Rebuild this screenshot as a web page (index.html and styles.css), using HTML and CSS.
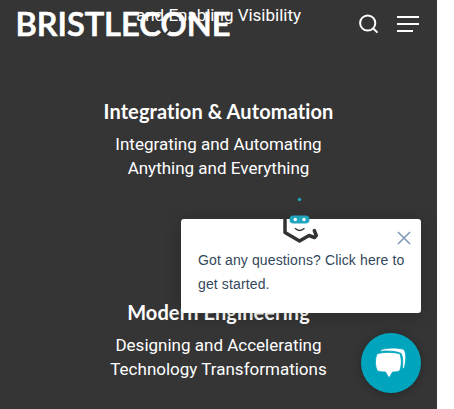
FILE: index.html
```html
<!DOCTYPE html>
<html lang="en">
<head>
<meta charset="utf-8">
<title>Bristlecone</title>
<link rel="stylesheet" href="styles.css">
</head>
<body>
<div class="page">
  <main class="services">
    <section class="service">
      <p>and Enabling Visibility</p>
    </section>
    <section class="service">
      <h2>Integration &amp; Automation</h2>
      <p>Integrating and Automating<br>Anything and Everything</p>
    </section>
    <section class="service">
      <h2>Modern Engineering</h2>
      <p>Designing and Accelerating<br>Technology Transformations</p>
    </section>
  </main>
  <header class="topbar">
    <svg class="logo" width="214" height="30" viewBox="0 0 214 30" role="img" aria-label="Bristlecone">
      <text x="-2.500" y="26.500" textLength="215" lengthAdjust="spacingAndGlyphs">BRISTLECONE</text>
      <path class="cut" d="M146 27l6-7"/>
    </svg>
    <svg class="search" width="20" height="20" viewBox="0 0 20 20"><circle cx="8.7" cy="9" r="7.6"/><path d="M14 14.300l4.500 4.300"/></svg>
    <div class="burger"><i></i><i></i><i></i></div>
  </header>
  <aside class="prompt">
    <svg class="bot" width="40" height="50" viewBox="0 0 40 50">
      <circle class="teal" cx="19.5" cy="4.5" r="1.7"/>
      <path class="faint" d="M4.5 25v-4L19.5 12l16 8"/>
      <path class="head" d="M5 24v13.5L19.5 46l9.5-5.5 5.500 2 1.800-2-2-5"/>
      <rect class="teal" x="9.5" y="20.5" width="20" height="8" rx="4"/>
      <circle class="eye" cx="15.3" cy="24.5" r="1.7"/><circle class="eye" cx="24" cy="24.5" r="1.7"/>
      <path class="smile" d="M15 33.2q4.5 4.5 9.5 0"/>
    </svg>
    <svg class="close" width="14" height="14" viewBox="0 0 14 14"><path d="M1 1l12 12M13 1L1 13"/></svg>
    <p>Got any questions? Click here to get started.</p>
  </aside>
  <div class="chat">
    <svg width="34" height="34" viewBox="0 0 34 34">
      <path d="M7 3.600C15 1.600 24 1.600 30 3.600c2.300 3 2.300 12 .2 18.500l-2 .8c.8-5 1-11-1-15.400C22 5 13.500 4.600 6.500 5.400z"/>
      <path d="M3.500 7.500C10 6 19 6 25.500 7.500c2.400 4 2.400 13 0 17.500-2.200.9-4.500 1-7 1L15 32 11.500 26c-2.500 0-5.500-.2-8-1C.8 20.500.8 11.500 3.500 7.500z"/>
    </svg>
  </div>
</div>
</body>
</html>
```
FILE: styles.css
```css
* { box-sizing: border-box; }
body { margin: 0; background: #fff; overflow: hidden; }
h2, p { margin: 0; }
.page { position: relative; width: 437px; height: 409px; overflow: hidden; background: #353535; color: #fff; }
.services { display: flex; flex-direction: column; gap: 84px; padding-top: 3px; text-align: center; font: 17px/24px Roboto, sans-serif; }
.service { height: 85px; flex: none; }
.service:first-child { height: 11px; }
.service:nth-child(2) { height: 117px; }
.service h2 { font: 700 20px/26px Lato, sans-serif; letter-spacing: .1px; margin-bottom: 8px; }
.topbar { position: absolute; top: 0; left: 0; width: 437px; height: 48px; padding: 0 18px; display: flex; align-items: center; }
.logo { font: 600 32px Lato, sans-serif; fill: #fff; overflow: visible; }
.logo text { stroke: #fff; stroke-width: .7; }
.logo .cut { stroke: #353535; stroke-width: 2; }
.search { margin-left: auto; margin-right: 18px; fill: none; stroke: #fff; stroke-width: 2; }
.burger { width: 22px; display: grid; gap: 5px; }
.burger i { height: 2px; background: #fff; }
.burger i:last-child { width: 16px; }
.prompt { position: absolute; left: 181px; top: 219px; width: 240px; height: 94px; padding: 29px 14px 0 17px; background: #fff; border-radius: 3px; color: #33475b; font: 14px/24px "Liberation Sans", Arial, sans-serif; letter-spacing: .13px; box-shadow: 0 2px 18px rgba(0,0,0,.2); }
.bot { position: absolute; left: 99px; top: -24px; fill: none; }
.bot .teal { fill: #20a5bd; }
.bot .eye { fill: #fff; }
.bot .head { stroke: #333; stroke-width: 3.5; stroke-linejoin: round; stroke-linecap: round; }
.bot .faint { stroke: #303437; stroke-width: 1; }
.bot .smile { stroke: #333; stroke-width: 1.4; }
.close { position: absolute; right: 10px; top: 12px; stroke: #7c98b6; stroke-width: 1.5; }
.chat { position: absolute; left: 361px; top: 333px; width: 60px; height: 60px; border-radius: 50%; background: #00a4bd; display: grid; place-items: center; box-shadow: 0 1px 8px rgba(0,0,0,.3); }
.chat svg { fill: #fff; stroke: #00a4bd; stroke-width: .8; }
```
